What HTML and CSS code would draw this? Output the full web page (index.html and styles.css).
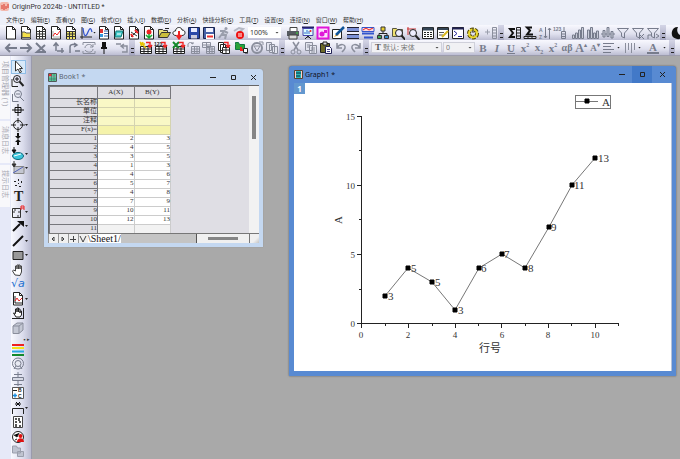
FILE: index.html
```html
<!DOCTYPE html>
<html lang="zh-CN">
<head>
    <meta charset="UTF-8">
    <meta name="viewport" content="width=device-width, initial-scale=1.0">
    <title>OriginPro 2024b - UNTITLED *</title>
    <link rel="stylesheet" href="styles.css">
</head>
<body>
    <!-- shapes shared by several icons -->
    <svg class="defs" aria-hidden="true">
        <symbol id="page"><path d="M2.5 .5h6l3 3v9.500h-9z" fill="#fff" stroke="#222"/><path d="M8.500 .5v3h3" stroke="#222" fill="none"/></symbol>
        <symbol id="grid"><path d="M1.500 5.500h11v7h-11z" fill="#fff" stroke="#222"/><path d="M1.500 8h11M1.500 10.500h11M5 5v8M9 5v8" stroke="#222"/></symbol>
        <symbol id="ggrid"><path d="M1.500 3.500h8v7h-8zM1.500 6h8M1.500 8.500h8M4.500 3v8M7 3v8" fill="none" stroke="#8a8e9c"/></symbol>
        <symbol id="lens"><circle cx="6" cy="5" r="3.500" fill="#eef" stroke="#222"/><path d="M8.500 7.500l4 4.500" stroke="#222" stroke-width="2"/></symbol>
        <symbol id="redarrow"><path d="M7 1.500h4v4M9 4l2 2.500 2-2.500" fill="none" stroke="#e22" stroke-width="1.400"/></symbol>
        <symbol id="funnel"><path d="M1.500 2.500h11L8.500 7v5l-3-1.500V7z" fill="none" stroke="#777c8c"/></symbol>
    </svg>

    <header class="titlebar">
        <svg class="logo" width="10" height="10"><rect width="9" height="9" rx="2" fill="#f3b9ae"/><path d="M2 7V3M4 8V2M6 7V4M8 6V2" stroke="#d8382c"/></svg>
        <h1>OriginPro 2024b - UNTITLED *</h1>
    </header>

    <nav class="menubar">
        <button>文件(<u>F</u>)</button>
        <button>编辑(<u>E</u>)</button>
        <button>查看(<u>V</u>)</button>
        <button>图(<u>G</u>)</button>
        <button>格式(<u>O</u>)</button>
        <button>插入(<u>I</u>)</button>
        <button>数据(<u>D</u>)</button>
        <button>分析(<u>A</u>)</button>
        <button>快捷分析(<u>S</u>)</button>
        <button>工具(<u>T</u>)</button>
        <button>设置(<u>R</u>)</button>
        <button>连接(<u>N</u>)</button>
        <button>窗口(<u>W</u>)</button>
        <button>帮助(<u>H</u>)</button>
    </nav>

    <div class="toolbar">
        <div class="group">
            <button class="tool" aria-label="新建项目"><svg><use href="#page"/></svg></button>
            <button class="tool" aria-label="新建文件夹"><svg><use href="#page"/><path d="M3 6h3l1 1h4.500v4.500H3z" fill="#f3e04a" stroke="#555"/></svg></button>
            <button class="tool" aria-label="新建工作簿"><svg><use href="#page"/><path d="M2.500 5.500h9M2.500 8h9M2.500 10.500h9M5.500 4v9M8.500 4v9" stroke="#333"/></svg></button>
            <button class="tool" aria-label="新建图"><svg><use href="#page"/><path d="M4 5v6h7" fill="none" stroke="#aaa"/><path d="M4 10l2-3 2 2 3-4" fill="none" stroke="#e22"/></svg></button>
            <button class="tool" aria-label="新建矩阵"><svg><use href="#page"/><path d="M3 5h8v8H3z" fill="#eee36a"/><path d="M2.500 5.500h9M2.500 8h9M2.500 10.500h9M5.500 5v8M8.500 5v8" stroke="#333"/></svg></button>
            <button class="tool" aria-label="新建函数图"><svg><path d="M3 1v12M1 11h12" stroke="#222"/><path d="M4 2c1 10 3 9 5 4s3-4 4 0" fill="none" stroke="#35c" stroke-width="1.300"/></svg></button>
            <span class="arrow"></span>
        </div>
        <div class="group">
            <button class="tool" aria-label="新建布局"><svg><use href="#page"/><path d="M3 3h3v4H3z" fill="#d33"/><path d="M3 8h3v3H3z" fill="#39d"/><path d="M7 5h4M7 7.500h4M7 10h4" stroke="#36a"/></svg></button>
            <button class="tool" aria-label="新建备注"><svg><use href="#page"/><path d="M4 5h7l-2 6H3z" fill="#4cc" stroke="#177"/><path d="M5 8h4" stroke="#fff"/></svg></button>
            <button class="tool" aria-label="数字化"><svg><use href="#page"/><path d="M4 11l7-7M4 6l6 4" stroke="#333"/><path d="M4 8l2 3M8 4l3 3" stroke="#e22" stroke-width="2"/></svg></button>
            <button class="tool" aria-label="新建图像"><svg><use href="#page"/><circle cx="7" cy="6" r="2.500" fill="#e22"/><path d="M7 8v4M4 9l3 3 3-3" fill="none" stroke="#1a3" stroke-width="1.500"/></svg></button>
        </div>
        <div class="group">
            <button class="tool" aria-label="打开"><svg><path d="M1.500 11.500v-8h4l1 1h4V7" fill="#e8df78" stroke="#333"/><path d="M1.500 11.500l3-5h9l-3 5z" fill="#c9bd3c" stroke="#333"/><path d="M8 2.500h4" stroke="#222"/></svg></button>
            <button class="tool" aria-label="从云端打开"><svg><path d="M4 9.500C0 9.500 0 5 3.500 5 4 0 10 1 10 4c4 0 4 5.500 0 5.500" fill="#fff" stroke="#222"/><path d="M7 5v6M4.500 9L7 12.500 9.500 9" fill="none" stroke="#e22" stroke-width="2"/></svg></button>
            <button class="tool" aria-label="保存项目"><svg><path d="M1.500 1.500h11v11h-11z" fill="#2948a8" stroke="#1a2550"/><path d="M4 2h6v4H4z" fill="#e8ecff"/><path d="M4 9h6v3.500H4z" fill="#ccd"/></svg></button>
            <button class="tool" aria-label="保存模板"><svg><path d="M1.500 1.500h11v11h-11z" fill="#4962a8" stroke="#1a2550"/><path d="M4 2h7v4H4z" fill="#f3f3ff"/><path d="M4 8h8v5H4z" fill="#fff"/><path d="M5 10.500h6" stroke="#e33" stroke-width="2"/></svg></button>
        </div>
        <div class="group">
            <button class="tool" aria-label="重新计算" disabled><svg><circle cx="9" cy="2.500" r="1.500" fill="#9a9eac"/><path d="M8 4l-3 4 4 1-1 4M5 8l-3 4M3 5h4l4 2" fill="none" stroke="#9a9eac" stroke-width="2"/></svg></button>
            <button class="tool" aria-label="停止计算"><svg><path d="M2 5l5-3 4 1-5 4" fill="none" stroke="#b5b8c4" stroke-width="2"/><circle cx="8" cy="9" r="4" fill="#e11"/><path d="M7 7v4M9 7v4" stroke="#fff"/></svg></button>
        </div>
        <label class="combo zoom"><select aria-label="缩放"><option>100%</option></select></label>
        <div class="group">
            <button class="tool" aria-label="打印"><svg><path d="M4 1.500h7V6H4z" fill="#fff" stroke="#444"/><path d="M1 5h12v5H1z" fill="#555a60"/><path d="M3 9h8v4H3z" fill="#ddd" stroke="#444"/><path d="M10 7h2" stroke="#3d3"/></svg></button>
            <button class="tool" aria-label="放映"><svg><path d="M1 1.500h12" stroke="#226" stroke-width="2"/><path d="M2 2.500h10v7H2z" fill="#dff" stroke="#44a"/><path d="M4 8V6M6 8V4M8 8V5" stroke="#36c"/><path d="M7 10v2M4 13l3-3 3 3" fill="none" stroke="#222"/><circle cx="9.500" cy="5" r="1" fill="#e22"/></svg></button>
            <button class="tool" aria-label="图库"><svg><path d="M1.500 1.500h11v11h-11z" fill="#fbe0fb" stroke="#e016d8" stroke-width="2"/><circle cx="6" cy="8" r="2.500" fill="#e016d8"/><path d="M8 4h3v3H8z" fill="#e016d8"/></svg></button>
            <button class="tool" aria-label="绘图样式"><svg><path d="M1.500 3.500h9v9h-9z" fill="#fff" stroke="#222"/><path d="M3 11l3-4 2 2z" fill="#e9a020"/><path d="M5 9l8-8" stroke="#159" stroke-width="2.500"/></svg></button>
            <button class="tool" aria-label="水平排列"><svg><path d="M1 2h12v3H1zM1 9h12v3H1z" fill="#7d92d8"/><path d="M1 1.500h12M1 5.500h12M1 8.500h12M1 12.500h12" stroke="#223"/><path d="M1 6h12v2H1z" fill="#eef"/></svg></button>
            <button class="tool" aria-label="图层管理"><svg><path d="M1 1.500h12v4H1z" fill="#fdd" stroke="#35c"/><path d="M2 4l3-2 3 2 4-2" fill="none" stroke="#e22"/><path d="M1 7.500h12M3 11.500h9" fill="none" stroke="#35c" stroke-width="2"/></svg></button>
        </div>
        <div class="group">
            <button class="tool" aria-label="项目浏览"><svg><path d="M7 4v4M3 10V7.500h8V10" fill="none" stroke="#222"/><path d="M5 1h4v4H5z" fill="#e8cf30" stroke="#333"/><path d="M1.500 9.500h4v3h-4z" fill="#3aa655" stroke="#333"/><path d="M8.500 9.500h4v3h-4z" fill="#38c" stroke="#333"/></svg></button>
        </div>
        <div class="group">
            <button class="tool" aria-label="查找文件"><svg><path d="M1.500 10.500v-8h4l1 1h5v7z" fill="#eee070" stroke="#554"/><g transform="translate(2 2)"><use href="#lens"/></g></svg></button>
            <button class="tool" aria-label="缩放查找"><svg><path d="M2 1v8M1 3h9" stroke="#c33"/><g transform="translate(1 2)"><use href="#lens"/></g></svg></button>
            <button class="tool" aria-label="结果表"><svg><path d="M1.500 1.500h11v11h-11z" fill="#fff" stroke="#222"/><path d="M2 3h10" stroke="#345" stroke-width="3"/><path d="M3 6.500h9M3 8.500h9M3 10.500h9" stroke="#222" stroke-dasharray="2 1"/></svg></button>
            <button class="tool" aria-label="编辑代码"><svg><path d="M1.500 1.500h11v11h-11z" fill="#fff" stroke="#222"/><path d="M2 3h10" stroke="#345" stroke-width="2"/><path d="M3 6.500h5M3 9h4" stroke="#555"/><path d="M6 11l6-6" stroke="#d8b820" stroke-width="2"/></svg></button>
            <button class="tool" aria-label="命令窗口"><svg><path d="M1.500 1.500h11v11h-11z" fill="#fff" stroke="#222"/><path d="M1 2.500h12" stroke="#225" stroke-width="2"/><path d="M3 5l3 2.500L3 10M7 10.500h4" fill="none" stroke="#229"/></svg></button>
            <button class="tool" aria-label="代码生成器"><svg><circle cx="7" cy="7.500" r="4" fill="none" stroke="#554a00" stroke-width="4" stroke-dasharray="3 1"/><circle cx="7" cy="7.500" r="4" fill="none" stroke="#ecd92c" stroke-width="2"/><path d="M7 2v5" stroke="#333"/></svg></button>
        </div>
        <div class="group spaced">
            <button class="tool" aria-label="添加列" disabled><svg><path d="M1 6h5M3.500 3.500v5" stroke="#9a9eac"/><path d="M8.500 1.500h4v11h-4zM8.500 4h4M8.500 7h4M8.500 10h4" fill="none" stroke="#8a8e9c"/></svg></button>
        </div>
        <button class="more" aria-label="更多"></button>
        <div class="group spaced">
            <button class="tool" aria-label="列统计"><svg><path d="M7 3H2l3 4-3 4h5" fill="none" stroke="#111" stroke-width="2"/><path d="M8.500 1.500h4v11h-4zM8.500 4h4M8.500 7h4M8.500 10h4" fill="none" stroke="#222"/></svg></button>
            <button class="tool" aria-label="行统计"><svg><path d="M9 1.500H4l3 3-3 4h6" fill="none" stroke="#111" stroke-width="2"/><path d="M1 10.500h12v2H1zM5 10v3M9 10v3" fill="none" stroke="#222"/></svg></button>
            <button class="tool" aria-label="排序" disabled><svg><text x="1" y="6">A</text><text x="1" y="13">Z</text><path d="M7.500 1v11M11.500 2v11M6 10l1.500 2L9 10M10 4l1.500-2L13 4" fill="none" stroke="#777c8c"/></svg></button>
        </div>
        <div class="group">
            <button class="tool" aria-label="行号填充" disabled><svg><text x="0" y="5">123</text><path d="M8.500 5.500h4v7h-4zM8.500 8h4M8.500 10.500h4M11 1v4" fill="none" stroke="#777c8c"/></svg></button>
        </div>
        <div class="group spaced">
            <button class="tool" aria-label="随机值"><svg><path d="M1.500 9v3.500h2V9zM4.500 7v5.500h2V7zM7.500 4v8.500h2V4zM10.500 1.500v11h2v-11z" fill="#c8ccd8" stroke="#777c8c"/></svg></button>
            <button class="tool" aria-label="直方图"><svg><path d="M1.500 4v8.500h2V4zM4.500 1.500v11h2v-11zM7.500 7v5.500h2V7zM10.500 5v7.500h2V5z" fill="#c8ccd8" stroke="#777c8c"/></svg></button>
            <button class="tool" aria-label="归一化"><svg><path d="M0 8h14" stroke="#777c8c"/><path d="M2 4.500h2V11H2zM6 1.500h2v9H6zM10 5.500h2V12h-2z" fill="#c8ccd8" stroke="#777c8c"/></svg></button>
        </div>
        <div class="group">
            <button class="tool" aria-label="筛选"><svg><use href="#funnel"/></svg></button>
            <button class="tool" aria-label="移除筛选"><svg><use href="#funnel"/><path d="M8 8l5 5M13 8l-5 5" stroke="#777c8c"/></svg></button>
            <button class="tool" aria-label="重新筛选"><svg><use href="#funnel"/><path d="M2 13V9h3M10 12l3-2-3-2" fill="none" stroke="#777c8c"/></svg></button>
        </div>
        <button class="more" aria-label="更多"></button>
        <div class="group spaced">
            <button class="tool" aria-label="屏蔽"><svg><path d="M8 1a6 6 0 1 0 5 9A6 6 0 0 1 8 1z" fill="#111"/></svg></button>
        </div>
    </div>

    <div class="toolbar second">
        <div class="group">
            <button class="tool" aria-label="后退"><svg><path d="M13 7H3M6 3L2 7l4 4" fill="none" stroke="#777c8c" stroke-width="2"/></svg></button>
            <button class="tool" aria-label="前进"><svg><path d="M1 7h10M8 3l4 4-4 4" fill="none" stroke="#777c8c" stroke-width="2"/></svg></button>
            <button class="tool" aria-label="停止"><svg><path d="M2 2l9 9M11 4l-8 7h9" fill="none" stroke="#777c8c" stroke-width="2"/></svg></button>
        </div>
        <div class="group spaced">
            <button class="tool" aria-label="上移"><svg><path d="M4 10V3M1.500 5L4 2l2.500 3M5 10h7M10 7v5" fill="none" stroke="#777c8c" stroke-width="1.500"/></svg></button>
            <button class="tool" aria-label="下移"><svg><path d="M3 12V6c0-3 4-3 7-2M7 2l3 2-3 2M8 10h5" fill="none" stroke="#777c8c" stroke-width="1.500"/></svg></button>
        </div>
        <div class="group">
            <button class="tool" aria-label="刷新"><svg><path d="M1 4V1.500h12V4M1 10v2.500h12V10M3 7c0-4 6-5 8-1M11 3v3H8M11 8c0 4-6 4-8 1" fill="none" stroke="#8a8e9c"/></svg></button>
            <button class="tool" aria-label="固定"><svg><path d="M5 1h4v5h1v2H4V6h1z" fill="#111"/><path d="M7 8v5" stroke="#111"/></svg></button>
        </div>
        <div class="group spaced">
            <button class="tool" aria-label="返回"><svg><path d="M1 3h5M6 5h6v6H7M9 3L6 5l3 2.500" fill="none" stroke="#8a8e9c" stroke-width="1.500"/></svg></button>
        </div>
        <button class="more" aria-label="更多"></button>
        <div class="group spaced">
            <button class="tool" aria-label="导入向导"><svg><use href="#grid"/><path d="M1 1l6 6M4 1L2 5M1 3h5" stroke="#e6c400" stroke-width="1.500"/><use href="#redarrow"/></svg></button>
            <button class="tool" aria-label="导入ASCII"><svg><use href="#grid"/><text class="dark" x="0" y="5">123</text><use href="#redarrow"/></svg></button>
        </div>
        <div class="group spaced">
            <button class="tool" aria-label="导入Excel"><svg><use href="#grid"/><path d="M1 1l6 6M7 1L1 7" stroke="#138a2c" stroke-width="2"/><use href="#redarrow"/></svg></button>
            <button class="tool" aria-label="重新导入" disabled><svg><g transform="translate(3 2)"><use href="#ggrid"/></g><path d="M1 6V3c1-2 4-2 5 0M4 2l2 1V1" fill="none" stroke="#8a8e9c"/></svg></button>
            <button class="tool" aria-label="批量导入" disabled><svg><path d="M.5 1.500h8v5h-8zM.5 4h8M4.500 2v4" fill="none" stroke="#8a8e9c"/><g transform="translate(3 2)"><use href="#ggrid"/></g></svg></button>
            <button class="tool" aria-label="导入多个文件"><svg><path d="M1.500 1.500h5v8h-5zM3.500 3.500h5v8h-5z" fill="#fff" stroke="#222"/><path d="M5.500 6.500h7v6h-7zM6 9h6M9 7v5" fill="#fff" stroke="#222"/><use href="#redarrow"/></svg></button>
        </div>
        <div class="group spaced">
            <button class="tool" aria-label="数据连接器"><svg><path d="M.5 3.500v-2h3l1 2h5v5h-9z" fill="#2aa33a" stroke="#174"/><path d="M6 6v3h3" fill="none" stroke="#e22" stroke-width="2"/><path d="M8.500 7.500h4v4h-4zM10 12h3" fill="#fff" stroke="#222"/></svg></button>
            <button class="tool" aria-label="网络导入" disabled><svg><circle cx="7" cy="7" r="5" fill="none" stroke="#8a8e9c" stroke-width="2"/><path d="M4 5l3 5 3-5zM9 1h4v3" fill="none" stroke="#8a8e9c"/></svg></button>
            <button class="tool" aria-label="复制批处理" disabled><svg><path d="M1.500 1.500h5v8h-5zM4.500 3.500h5v8h-5zM7.500 5.500h5v7h-5z" fill="#e2e4ee" stroke="#8a8e9c"/></svg></button>
        </div>
        <button class="more" aria-label="更多"></button>
        <div class="group spaced">
            <button class="tool" aria-label="剪切"><svg><path d="M4 1l5 8M10 1L5 9" stroke="#8a8e9c" stroke-width="1.500"/><circle cx="4" cy="11" r="2" fill="none" stroke="#8a8e9c"/><circle cx="10" cy="11" r="2" fill="none" stroke="#8a8e9c"/></svg></button>
            <button class="tool" aria-label="复制"><svg><path d="M1.500 1.500h7v8h-7zM5.500 4.500h7v8h-7z" fill="#e2e4ee" stroke="#8a8e9c"/><path d="M7 7h4M7 9h4M7 11h4M3 4h3M3 6h2" stroke="#8a8e9c"/></svg></button>
            <button class="tool" aria-label="粘贴"><svg><path d="M1.500 2.500h9v9h-9z" fill="#6c6a28" stroke="#222"/><path d="M4 1h4v3H4z" fill="#ddd" stroke="#222"/><path d="M6.500 5.500h4l2 2v5h-6z" fill="#fff" stroke="#225"/><path d="M8 8.500h3M8 10.500h3" stroke="#448"/></svg></button>
            <button class="tool" aria-label="撤销" disabled><svg><path d="M3 2v5h5M3 7c3-5 9-4 8 0-.5 2-2 3-3 4" fill="none" stroke="#8a8e9c" stroke-width="1.500"/></svg></button>
            <button class="tool" aria-label="重做" disabled><svg><path d="M11 2v5H6M11 7C8 2 2 3 3 7c.5 2 2 3 3 4" fill="none" stroke="#8a8e9c" stroke-width="1.500"/></svg></button>
        </div>
        <button class="more" aria-label="更多"></button>
        <label class="combo font"><span class="tt">T</span><select aria-label="字体" disabled><option>默认: 宋体</option></select></label>
        <label class="combo size"><select aria-label="字号" disabled><option>0</option></select></label>
        <div class="group format">
            <button class="tool"><b>B</b></button>
            <button class="tool"><i>I</i></button>
            <button class="tool"><u>U</u></button>
            <button class="tool">x<sup>2</sup></button>
            <button class="tool">x<sub>2</sub></button>
            <button class="tool">x<sup>2</sup></button>
            <button class="tool greek">αβ</button>
            <button class="tool large">A<sup>▴</sup></button>
            <button class="tool small">A<sup>▾</sup></button>
            <button class="tool" aria-label="对齐"><svg><path d="M1 2.500h11M1 5.500h8M1 8.500h11M1 11.500h8" stroke="#777c8c"/></svg></button>
            <span class="arrow"></span>
            <button class="tool" aria-label="线型"><svg><path d="M2.500 2v10M5.500 2v7M8.500 2v10M11.500 2v7" stroke="#8a8e9c"/></svg></button>
            <span class="arrow"></span>
            <button class="tool color">A</button>
            <span class="arrow"></span>
        </div>
        <button class="more" aria-label="更多"></button>
    </div>

    <div class="main">
        <aside class="docks">
            <button class="dock-tab first">项目管理器 (1)</button>
            <button class="dock-tab">消息日志</button>
            <button class="dock-tab">提示日志</button>
        </aside>

        <div class="palette">
            <div class="pair">
                <button class="tool selected" aria-label="指针"><svg><path d="M4.500 1v10l2.500-2 2 4 1.500-1-2-3.500h3z" fill="#fff" stroke="#333"/></svg></button>
                <button class="tool" aria-label="放大"><svg><use href="#lens"/><path d="M4 5h4M6 3v4" stroke="#111"/><path d="M1 5v7.500h6" fill="none" stroke="#222"/></svg></button>
            </div>
            <div class="pair">
                <button class="tool" aria-label="缩小"><svg><circle cx="7" cy="5" r="3.500" fill="none" stroke="#777c8c"/><path d="M5 5h4M9 8l4 4M1.500 5v7.500h6" fill="none" stroke="#777c8c"/></svg></button>
                <button class="tool" aria-label="屏幕读取"><svg><path d="M7 1v12M1 7h12M4 4.500h6v5H4z" fill="none" stroke="#111"/></svg></button>
            </div>
            <div class="pair">
                <button class="tool" aria-label="数据读取"><svg><circle cx="7" cy="7" r="4.500" fill="none" stroke="#222"/><path d="M7 0v5M7 9v5M0 7h5M9 7h5" stroke="#222"/></svg><span class="arrow"></span></button>
                <button class="tool" aria-label="数据选择"><svg><path d="M7 1v4M7 9v4" stroke="#111" stroke-width="2"/><path d="M4 4l3 3 3-3zM4 10l3-3 3 3z" fill="#111"/></svg></button>
            </div>
            <div class="pair">
                <button class="tool" aria-label="区域选择"><svg><ellipse cx="7" cy="9" rx="5.500" ry="3.500" fill="#3cc6dd" stroke="#167"/><path d="M3 9l7-2" stroke="#fff"/><path d="M3 0v5M1 3l2 3 2-3z" fill="#111" stroke="#111"/></svg><span class="arrow"></span></button>
                <button class="tool" aria-label="屏蔽区域"><svg><path d="M3 5.500h10v7H3z" fill="#c3c6d0" stroke="#888"/><path d="M2 12l10-6" stroke="#56b"/><path d="M3 0v5M1 3l2 3 2-3z" fill="#333" stroke="#333"/></svg><span class="arrow"></span></button>
            </div>
            <div class="pair">
                <button class="tool" aria-label="绘制数据"><svg><path d="M3 5h2v1H3zM7 3h1v2H7zM10 5h1v2h-1zM4 9h2v1H4zM8 10h2v1H8zM7 7h1v1H7z" fill="#222"/></svg></button>
                <button class="tool letter" aria-label="文本">T</button>
            </div>
            <div class="pair">
                <button class="tool" aria-label="注释"><svg><path d="M1.500 3.500h8v9h-8zM4 3v3M1 7h3M7 10v3M7 7h3" fill="none" stroke="#333"/><path d="M10 5V1h3v4M10 3h3" fill="none" stroke="#e22"/></svg><span class="arrow"></span></button>
                <button class="tool" aria-label="箭头"><svg><path d="M2 12l7-7" stroke="#111" stroke-width="2"/><path d="M6 2h7v6z" fill="#111"/></svg><span class="arrow"></span></button>
            </div>
            <div class="pair">
                <button class="tool" aria-label="直线"><svg><path d="M2 12L12 2" stroke="#111" stroke-width="2"/></svg><span class="arrow"></span></button>
                <button class="tool" aria-label="矩形"><svg><path d="M2 3.500h10v8H2z" fill="#999" stroke="#222"/></svg><span class="arrow"></span></button>
            </div>
            <div class="pair">
                <button class="tool" aria-label="平移"><svg><path d="M4 12L1.500 8l1-1L4.500 8V3h1.500v3-4h1.500v4-4H9v4-3h1.500v6L9 12.500z" fill="#fff" stroke="#444"/></svg></button>
                <button class="tool root" aria-label="公式">√a</button>
            </div>
            <div class="pair">
                <button class="tool" aria-label="插入图"><svg><use href="#page"/><path d="M4 4v7h7" fill="none" stroke="#222"/><path d="M4 9l2-3 2 3 3-3" fill="none" stroke="#e22"/></svg><span class="arrow"></span></button>
                <button class="tool" aria-label="缩放平移"><svg><path d="M5 11L2.500 7l2 .500V3H6v3-4h1.500v4-3H9v4-2h1.500v4L9 11z" fill="#fff" stroke="#222"/><path d="M1 12.500h12M12.500 2v11" stroke="#222"/></svg></button>
            </div>
            <div class="pair">
                <button class="tool" aria-label="三维旋转"><svg><path d="M2 5l4-3h6v7l-4 3.500H2zM2 5h6v7M8 5l4-3" fill="#c4c8d4" stroke="#8a8e9c"/></svg></button>
            </div>
            <button class="more-down" aria-label="更多">▪▸</button>
            <div class="pair">
                <button class="tool" aria-label="颜色"><svg><path d="M1 2h12" stroke="#e22" stroke-width="2"/><path d="M1 5h12" stroke="#f2e21c" stroke-width="2"/><path d="M1 8.500h12" stroke="#29a7e0" stroke-width="2"/><path d="M1 12h12" stroke="#148a2c" stroke-width="2"/></svg></button>
                <button class="tool" aria-label="遮罩"><svg><circle cx="7" cy="6.500" r="5.500" fill="none" stroke="#777c8c"/><circle cx="7" cy="6.500" r="3" fill="#e8eaf2" stroke="#777c8c"/><path d="M3 12l2-3M11 12L9 9" stroke="#777c8c"/></svg></button>
            </div>
            <div class="pair">
                <button class="tool" aria-label="分布"><svg><path d="M1.500 5.500h11v3h-11zM7 0v5M7 9v5M3 2.500h8M3 12.500h8" fill="#d6d9e4" stroke="#777c8c"/></svg></button>
                <button class="tool" aria-label="图例"><svg><path d="M1.500 1.500h11v11h-11z" fill="#fff" stroke="#555"/><path d="M2 4.500h4" stroke="#222"/><path d="M2 9.500h4M4 7.500v4" stroke="#1b8de0" stroke-width="1.500"/><text class="dark" x="7" y="6">B</text><text class="dark" x="7" y="12">C</text></svg></button>
            </div>
            <div class="pair">
                <button class="tool" aria-label="显著性"><svg><path d="M1.500 13V7.500h11V13" fill="none" stroke="#222"/><path d="M5 1l4 4M9 1L5 5M4 3h6" stroke="#111"/></svg><span class="arrow"></span></button>
                <button class="tool" aria-label="表格"><svg><path d="M2.500 1.500h9v11h-9z" fill="#fff" stroke="#444"/><path d="M4 4h2M8 3v3M4 7h2M8 7h2M5 9v3M8 11h2" stroke="#222" stroke-width="1.500"/></svg></button>
            </div>
            <div class="pair">
                <button class="tool" aria-label="用户"><svg><circle cx="7" cy="7" r="5.500" fill="#fff" stroke="#222"/><path d="M3 5l3 2 2-4M4 10l2-1" stroke="#222"/><circle cx="9.500" cy="6" r="2" fill="#d11"/><path d="M6 12c0-5 7-5 7 0z" fill="#d11"/></svg></button>
                <button class="tool" aria-label="文件夹"><svg><path d="M1.500 9V2h4l1 2h3v5zM6.500 7.500h6v5h-6z" fill="#bfc3d0" stroke="#9a9eac"/></svg></button>
            </div>
        </div>

        <main class="workspace">
            <section class="window book">
                <div class="caption">
                    <svg width="9" height="9"><path d="M.5 .5h8v8h-8z" fill="#fff" stroke="#555"/><path d="M1 1h3v2H1z" fill="#e33"/><path d="M4 1h4v2H4zM1 4h7v4H1z" fill="#5c9"/><path d="M3.500 1v8M6 1v8M1 3.500h8M1 6h8" stroke="#466" stroke-opacity=".6"/></svg>
                    <h2>Book1 *</h2>
                    <button aria-label="最小化"><svg><path d="M1 4.500h6"/></svg></button>
                    <button aria-label="最大化"><svg><path d="M2.500 2.500h4v4h-4z"/></svg></button>
                    <button aria-label="关闭"><svg><path d="M2 2l5 5M7 2L2 7"/></svg></button>
                </div>
                <div class="sheet">
                    <table>
                        <thead>
                            <tr><th></th><th>A(X)</th><th>B(Y)</th></tr>
                        </thead>
                        <tbody>
                            <tr class="label"><th>长名称</th><td></td><td></td></tr>
                            <tr class="label"><th>单位</th><td></td><td></td></tr>
                            <tr class="label"><th>注释</th><td></td><td></td></tr>
                            <tr class="label formula"><th>F(x)=</th><td></td><td></td></tr>
                            <tr><th>1</th><td>2</td><td>3</td></tr>
                            <tr><th>2</th><td>4</td><td>5</td></tr>
                            <tr><th>3</th><td>3</td><td>5</td></tr>
                            <tr><th>4</th><td>1</td><td>3</td></tr>
                            <tr><th>5</th><td>4</td><td>6</td></tr>
                            <tr><th>6</th><td>5</td><td>7</td></tr>
                            <tr><th>7</th><td>4</td><td>8</td></tr>
                            <tr><th>8</th><td>7</td><td>9</td></tr>
                            <tr><th>9</th><td>10</td><td>11</td></tr>
                            <tr><th>10</th><td>12</td><td>13</td></tr>
                            <tr class="empty"><th>11</th><td></td><td></td></tr>
                        </tbody>
                    </table>
                    <div class="vscroll"><div class="thumb"></div></div>
                </div>
                <div class="sheet-tabs">
                    <button aria-label="上一个"><svg><path d="M5 2L3 4l2 2z"/></svg></button>
                    <button aria-label="下一个"><svg><path d="M3 2l2 2-2 2z"/></svg></button>
                    <button aria-label="添加"><svg><path d="M1 4.500h6M4.500 1v6"/></svg></button>
                    <button aria-label="列表"><svg><path d="M1 1l3 6 3-6"/></svg></button>
                    <button class="tab">\Sheet1/</button>
                    <div class="fill"></div>
                    <div class="hscroll"><div class="thumb"></div></div>
                    <div class="grip"></div>
                </div>
            </section>

            <section class="window graph">
                <div class="caption">
                    <svg width="9" height="9"><path d="M.5 .5h8v8h-8z" fill="#fcc" stroke="#543"/><path d="M2 1h5v7H2z" fill="#2cb5b5"/><path d="M2 3h5M2 6h4" stroke="#034"/></svg>
                    <h2>Graph1 *</h2>
                    <button aria-label="最小化"><svg><path d="M1 4.500h6"/></svg></button>
                    <button class="hot" aria-label="还原"><svg><path d="M2.500 2.500h4v4h-4z"/></svg></button>
                    <button aria-label="关闭"><svg><path d="M2 2l5 5M7 2L2 7"/></svg></button>
                </div>
                <div class="plot">
                    <button class="layer">1</button>
                    <svg class="chart" viewBox="0 0 377 288" role="img" aria-label="A">
                        <!-- axes and ticks -->
                        <path class="axis" d="M67.500 33v208M67 240.500h258"/>
                        <path class="axis" d="M63 33.500h4M63 102.500h4M63 171.500h4M63 240.500h4M65 67.500h2M65 136.500h2M65 206.500h2"/>
                        <path class="axis" d="M67.500 241v4M114.500 241v4M161.500 241v4M207.500 241v4M254.500 241v4M301.500 241v4"/>
                        <path class="axis" d="M91.500 241v2M138.500 241v2M184.500 241v2M231.500 241v2M277.500 241v2M324.500 241v2"/>
                        <g class="ticks end">
                            <text x="61" y="37">15</text><text x="61" y="106">10</text>
                            <text x="61" y="175">5</text><text x="61" y="244">0</text>
                        </g>
                        <g class="ticks">
                            <text x="67" y="255">0</text><text x="114" y="255">2</text><text x="161" y="255">4</text>
                            <text x="208" y="255">6</text><text x="254" y="255">8</text><text x="301" y="255">10</text>
                        </g>
                        <text class="title" x="196" y="269">行号</text>
                        <text class="title" transform="translate(48 137) rotate(-90)">A</text>

                        <!-- series A -->
                        <polyline class="line" points="91,213 114,185 138,199 161,227 185,185 208,171 231,185 255,144 278,102 301,75"/>
                        <path class="marks" d="M89 211h4v4h-4zM112 183h4v4h-4zM136 197h4v4h-4zM159 225h4v4h-4zM183 183h4v4h-4zM206 169h4v4h-4zM229 183h4v4h-4zM253 142h4v4h-4zM276 100h4v4h-4zM299 73h4v4h-4z"/>
                        <g class="values">
                            <text x="94" y="217">3</text><text x="117" y="189">5</text><text x="141" y="203">5</text>
                            <text x="164" y="231">3</text><text x="187" y="189">6</text><text x="210" y="175">7</text>
                            <text x="234" y="189">8</text><text x="257" y="148">9</text><text x="280" y="106">11</text>
                            <text x="304" y="79">13</text>
                        </g>

                        <rect class="legend" x="281.500" y="12.500" width="35" height="13"/>
                        <path class="line" d="M282 18.500h22"/>
                        <path class="marks" d="M291 16h4v4h-4z"/>
                        <text class="title" x="312" y="23">A</text>
                    </svg>
                </div>
            </section>
        </main>
    </div>
</body>
</html>
```
FILE: styles.css
```css
* {
    box-sizing: border-box;
}
body {
    margin: 0;
    height: 100vh;
    display: flex;
    flex-direction: column;
    overflow: hidden;
    background-color: #edf0f9;
    color: #333;
    font-family: "Noto Sans", "Noto Sans CJK SC", sans-serif;
    font-size: 6px;
}
button {
    margin: 0;
    padding: 0;
    border: 0;
    background: none;
    color: inherit;
    font: inherit;
}
h1, h2 {
    margin: 0;
    font-weight: normal;
}
.defs {
    position: absolute;
    width: 0;
    height: 0;
}

/* title and menu */
.titlebar {
    display: flex;
    align-items: center;
    gap: 2px;
    height: 13px;
    flex: none;
}
.titlebar h1 {
    font: 7px/12px Roboto, sans-serif;
}
.menubar {
    display: flex;
    align-items: center;
    gap: 6px;
    height: 12px;
    flex: none;
    padding-left: 6px;
    white-space: nowrap;
}

/* toolbars */
.toolbar {
    display: flex;
    align-items: center;
    height: 15px;
    flex: none;
    padding-left: 3px;
    overflow: hidden;
    background: linear-gradient(#f8f8fe, #dfe0ee 60%, #bcbdd2);
}
.toolbar.second {
    height: 16px;
    border-bottom: 1px solid #9c9cac;
}
.group {
    display: flex;
    align-items: center;
    flex: none;
}
.spaced {
    margin-left: 3px;
}
.tool {
    display: flex;
    align-items: center;
    justify-content: center;
    flex: none;
    width: 15px;
    height: 14px;
}
.tool svg {
    width: 14px;
    height: 14px;
    flex: none;
}
.tool text {
    font: bold 5px "Liberation Sans", sans-serif;
    fill: #777c8c;
}
.tool text.dark {
    fill: #222;
}
.arrow {
    width: 3px;
    height: 2px;
    flex: none;
    background-color: #222;
    clip-path: polygon(0 0, 100% 0, 50% 100%);
}
.more {
    width: 6px;
    height: 100%;
    flex: none;
    padding-top: 5px;
    background: linear-gradient(#d4d5e6, #a5a6c0);
}
.more::after {
    content: "";
    display: block;
    width: 3px;
    height: 3px;
    margin: auto;
    border-top: 1px solid #222;
    border-bottom: 1px solid #222;
}
.combo {
    display: flex;
    align-items: center;
    flex: none;
    height: 11px;
    margin-left: 2px;
    background-color: #fff;
}
.combo select {
    flex: 1;
    min-width: 0;
    padding: 0 2px;
    border: 0;
    appearance: none;
    background: none;
    color: #333;
    font: 7px/11px "Noto Sans", "Noto Sans CJK SC", sans-serif;
}
.combo::after {
    content: "";
    width: 4px;
    height: 2px;
    margin-right: 2px;
    background-color: #444;
    clip-path: polygon(0 0, 100% 0, 50% 100%);
}
.combo.zoom {
    width: 33px;
    margin-right: 4px;
}
.combo.font, .combo.size {
    background-color: #f1f1f4;
    border: 1px solid #cfd0da;
}
.combo.font {
    width: 71px;
}
.combo.size {
    width: 32px;
    margin: 0 1px;
}
.combo select:disabled {
    color: #777;
    opacity: 1;
}
.tt {
    padding-left: 3px;
    font: bold 9px/11px "Liberation Serif", serif;
    color: #555;
}
.format {
    color: #777c8c;
    font: bold 11px/12px "Liberation Serif", serif;
}
.format .tool {
    width: 14px;
    display: block;
    text-align: center;
    white-space: nowrap;
}
.format .arrow {
    margin: 0 3px 0 1px;
}
.format sup, .format sub {
    font-size: 6px;
    line-height: 6px;
}
.format .large {
    font-size: 12px;
}
.format .small {
    font-size: 9px;
}
.format .greek {
    font-size: 10px;
}
.format .color {
    border-bottom: 2px solid #777c8c;
    height: 13px;
    margin: 0 3px;
    width: 12px;
}

/* left side */
.main {
    display: flex;
    flex: 1;
    min-height: 0;
}
.docks {
    display: flex;
    flex-direction: column;
    gap: 2px;
    width: 11px;
    flex: none;
    background-color: #e6e9f8;
}
.dock-tab {
    width: 10px;
    padding: 5px 0 9px;
    background-color: #f8f8fb;
    color: #a4a5b0;
    font-size: 7px;
    line-height: 10px;
    text-align: left;
    writing-mode: vertical-rl;
    text-orientation: sideways;
}
.dock-tab.first {
    padding-bottom: 13px;
}
.palette {
    display: flex;
    flex-direction: column;
    gap: 1px;
    width: 21px;
    flex: none;
    padding-top: 4px;
    overflow: hidden;
    border-right: 1px solid #9a9aac;
    background: linear-gradient(to right, #f8f9ff, #dadcec 60%, #b9bbd0);
}
.palette .tool {
    width: 19px;
    justify-content: flex-start;
}
.palette .tool.selected {
    width: 15px;
    background-color: #d8eafa;
    outline: 1px solid #8fbde6;
    outline-offset: -1px;
}
.palette .letter {
    padding-left: 3px;
    color: #222;
    font: bold 14px/14px "Liberation Serif", serif;
}
.palette .root {
    color: #1b6fd0;
    font: italic 11px/14px "DejaVu Sans", sans-serif;
}
.more-down {
    height: 6px;
    flex: none;
    padding-right: 1px;
    font-size: 5px;
    line-height: 6px;
    text-align: right;
}

/* child windows float on the workspace */
.workspace {
    position: relative;
    flex: 1;
    background-color: #a9a9a9;
}
.window {
    position: absolute;
    display: flex;
    flex-direction: column;
    border-radius: 3px 3px 0 0;
}
.caption {
    display: flex;
    align-items: center;
    height: 16px;
    flex: none;
}
.caption h2 {
    flex: 1;
    padding-left: 2px;
    font-size: 7px;
    line-height: 16px;
}
.caption button {
    display: flex;
    align-items: center;
    justify-content: center;
    width: 20px;
    height: 16px;
}
.caption button svg {
    width: 9px;
    height: 9px;
    fill: none;
    stroke: #222;
}
.book {
    left: 12px;
    top: 13px;
    width: 219px;
    padding: 0 4px 4px;
    background-color: #c4d8f1;
    box-shadow: 0 0 1px #777;
}
.book .caption {
    margin-right: -4px;
}
.book h2 {
    color: #5a6472;
}
.graph {
    left: 257px;
    top: 10px;
    width: 387px;
    padding: 0 4px 5px 5px;
    background-color: #588ad2;
    box-shadow: 0 0 2px #555;
}
.graph .caption {
    height: 17px;
}
.graph .caption h2 {
    color: #112;
}
.graph .hot {
    height: 17px;
    background-color: #4279c8;
}

/* worksheet */
.sheet {
    display: flex;
    align-items: flex-start;
    justify-content: space-between;
    height: 148px;
    overflow: hidden;
    border-top: 1px solid #666;
    border-left: 1px solid #666;
    background-color: #dfdee4;
}
table {
    border-collapse: collapse;
    table-layout: fixed;
    width: 122px;
    font: 7px/7px "Liberation Serif", "Noto Sans CJK SC", serif;
}
th, td {
    height: 9px;
    padding: 0;
    text-align: right;
    vertical-align: top;
    font-weight: normal;
}
td {
    border: 1px solid #ccc;
    background-color: #fff;
}
th {
    border: 1px solid #77777c;
    background-color: #dfdee4;
}
th:first-child {
    width: 48px;
}
thead th {
    height: 12px;
    text-align: center;
    vertical-align: middle;
}
.label td {
    background-color: #f9f8c6;
    border-color: #d4d3b0;
}
.formula td {
    background-color: #f5f3ab;
}
.empty td {
    background-color: #f2f2f2;
}
.vscroll {
    width: 10px;
    height: 100%;
    padding: 10px 3px 0;
    background-color: #f2f2f2;
}
.vscroll .thumb {
    height: 43px;
    background-color: #858585;
}
.sheet-tabs {
    display: flex;
    height: 10px;
    background-color: #f0f0f0;
    border-top: 1px solid #777;
}
.sheet-tabs button {
    width: 10px;
    border: 1px solid #999;
    border-width: 0 0 0 1px;
}
.sheet-tabs button svg {
    display: block;
    width: 8px;
    height: 8px;
    fill: none;
    stroke: #444;
}
.sheet-tabs .tab {
    width: auto;
    border: 0;
    background-color: #fff;
    color: #111;
    font: 10px/9px "Liberation Serif", serif;
}
.fill {
    flex: 1;
    background-color: #c4c4c4;
    border-right: 1px solid #555;
}
.hscroll {
    width: 52px;
    padding: 3px 11px;
}
.hscroll .thumb {
    height: 3px;
    background-color: #858585;
}
.grip {
    width: 10px;
    border-left: 1px solid #777;
    background: linear-gradient(135deg, #f0f0f0 60%, #c4c4c4);
}

/* graph page */
.plot {
    position: relative;
    background-color: #fff;
    border: 1px solid #b4c2da;
    border-width: 0 1px 0 0;
}
.layer {
    position: absolute;
    left: 0;
    top: 0;
    width: 11px;
    height: 11px;
    background-color: #6398cf;
    color: #fff;
    font: bold 8px/11px "Noto Sans", sans-serif;
}
.chart {
    display: block;
    width: 100%;
    height: auto;
}
.chart text {
    font-family: "Liberation Serif", "Noto Sans CJK SC", serif;
    fill: #333;
}
.axis {
    fill: none;
    stroke: #222;
}
.chart .ticks text {
    font-size: 9px;
    text-anchor: middle;
}
.chart .end text {
    text-anchor: end;
}
.title {
    font-size: 11px;
    text-anchor: middle;
}
.values {
    font-size: 11px;
}
.line, .legend {
    fill: none;
    stroke: #777;
}
.marks {
    fill: #000;
    stroke: #000;
}
```
